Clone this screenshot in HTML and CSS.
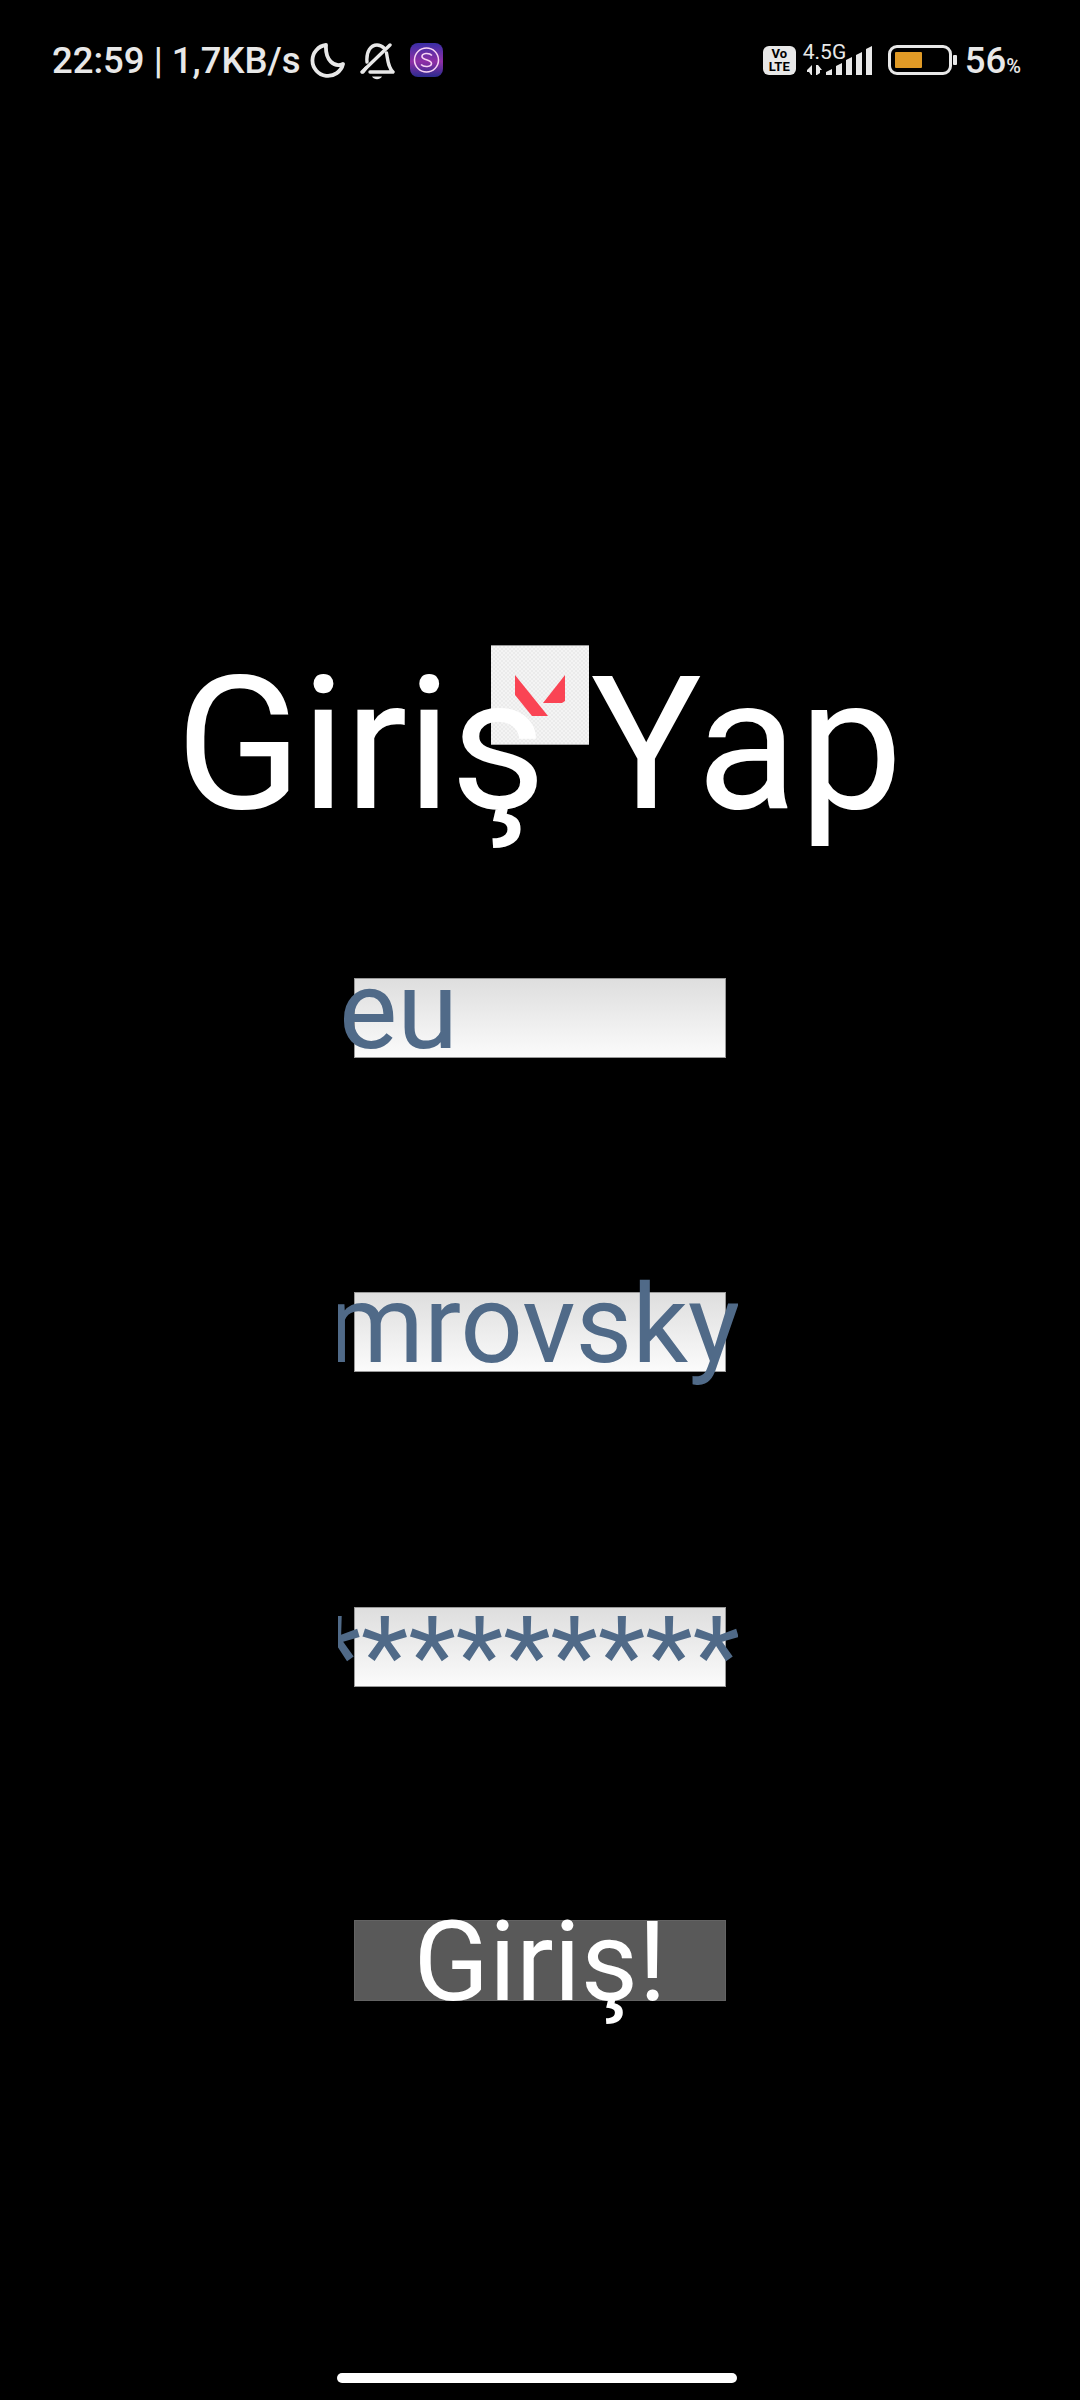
FILE: index.html
```html
<!DOCTYPE html>
<html lang="en">
<head>
    <meta charset="UTF-8">
    <title>Giriş Yap</title>
    <link rel="stylesheet" href="styles.css">
</head>
<body>

    <div class="status-bar">
        <div class="status-left">
            <span class="status-text">22:59 | 1,7KB/s</span>
            <svg class="icon-moon" width="35" height="35" viewBox="0 0 35 35">
                <path d="M16 2A15.5 15.5 0 1 0 33 21C24 25 15 17 16 2Z" fill="none" stroke="#e8e8e8" stroke-width="3.8" stroke-linejoin="round"/>
            </svg>
            <svg class="icon-bell" width="35" height="39" viewBox="0 0 35 39">
                <path d="M30 3L2 30" fill="none" stroke="#e8e8e8" stroke-width="3.4" stroke-linecap="round"/>
                <path d="M7 20C6 9 11 3 17 3C20 3 22 4 24 6M26.500 11C28 19 28 25 33 30H10M6 26L3 30" fill="none" stroke="#e8e8e8" stroke-width="3.4" stroke-linejoin="round" stroke-linecap="round"/>
                <path d="M12 34.500C14 38 20 38 22 34.500Z" fill="#e8e8e8"/>
            </svg>
            <svg class="icon-app" width="33" height="34" viewBox="0 0 33 34">
                <defs>
                    <linearGradient id="appFill" x1="0" y1="0" x2="0" y2="1">
                        <stop offset="0" stop-color="#3a2ea6"/>
                        <stop offset="0.55" stop-color="#8f2fa6"/>
                        <stop offset="1" stop-color="#2a2b8e"/>
                    </linearGradient>
                </defs>
                <rect width="33" height="34" rx="8" fill="url(#appFill)"/>
                <circle cx="16.500" cy="17" r="12" fill="none" stroke="#f8d4f4" stroke-width="1.500"/>
                <path d="M22 12.500C19 9.500 12 10 12 13.500C12 17.500 21.500 16 21.500 20.500C21.500 24 14 24.500 11 21.500" fill="none" stroke="#f8d4f4" stroke-width="1.600"/>
            </svg>
        </div>
        <div class="status-right">
            <div class="volte"><span>Vo</span><span>LTE</span></div>
            <div class="network">
                <span class="network-label">4.5G</span>
                <svg class="icon-signal" width="66" height="30" viewBox="0 0 66 30">
                    <path d="M0 24L5 19V29H4L2 26H0ZM9 19H11L15 24H13V27L10 29H9Z" fill="#e8e8e8"/>
                    <path d="M19 26L25 23V29H19Z" fill="#e8e8e8"/>
                    <path d="M29 20L35 17V29H29Z" fill="#e8e8e8"/>
                    <path d="M39 14L45 11V29H39Z" fill="#e8e8e8"/>
                    <path d="M49 9L55 6V29H49Z" fill="#e8e8e8"/>
                    <path d="M59 3L65 0V29H59Z" fill="#e8e8e8"/>
                </svg>
            </div>
            <div class="battery">
                <div class="battery-body"><div class="battery-fill"></div></div>
                <div class="battery-nub"></div>
            </div>
            <span class="status-text">56<small class="percent">%</small></span>
        </div>
    </div>

    <div class="login">
        <div class="title-wrap">
            <div class="logo">
                <svg width="50" height="42" viewBox="0 0 50 42">
                    <path d="M0 0L33 41H17L0 20Z" fill="#fa4454"/>
                    <path d="M50 0V26L47 28H28Z" fill="#fa4454"/>
                </svg>
            </div>
            <h1 class="title"><span class="title-first">Giriş</span> <span class="title-last">Yap</span></h1>
        </div>

        <div class="field">
            <div class="field-text"><span>eu</span></div>
        </div>
        <div class="field field-user">
            <div class="field-text field-end"><span>mrovsky</span></div>
        </div>
        <div class="field field-pass">
            <div class="field-text field-end field-stars"><span>*********</span></div>
        </div>
        <div class="submit">Giriş!</div>
    </div>

    <div class="home-bar"></div>

</body>
</html>
```

FILE: styles.css
```css
body {
    margin: 0;
    width: 1080px;
    height: 2400px;
    background: #000;
    font-family: Roboto, "Liberation Sans", sans-serif;
    display: flex;
    flex-direction: column;
    overflow: hidden;
}

/* status bar */
.status-bar {
    display: flex;
    justify-content: space-between;
    padding: 41px 59px 0 52px;
    height: 60px;
    color: #e8e8e8;
}
.status-left, .status-right {
    display: flex;
    align-items: flex-start;
}
.status-text {
    font-size: 36.5px;
    font-weight: 500;
    line-height: 40px;
    white-space: nowrap;
}
.percent {
    font-size: 20px;
}
.icon-moon {
    margin: 2px 0 0 9px;
}
.icon-bell {
    margin: 1px 0 0 15px;
}
.icon-app {
    margin: 2px 0 0 15px;
}
.volte {
    width: 33px;
    height: 29px;
    margin-top: 5px;
    background: #e8e8e8;
    border-radius: 6px;
    color: #000;
    font-size: 13px;
    line-height: 12.500px;
    font-weight: 700;
    display: flex;
    flex-direction: column;
    align-items: center;
    justify-content: center;
}
.network {
    width: 71px;
    margin-left: 7px;
    position: relative;
    height: 40px;
}
.network-label {
    position: absolute;
    left: 0;
    top: 0;
    font-size: 21px;
    line-height: 22px;
}
.icon-signal {
    position: absolute;
    left: 4px;
    top: 5px;
}
.battery {
    display: flex;
    align-items: center;
    margin: 4px 8px 0 14px;
}
.battery-body {
    width: 64px;
    height: 30px;
    box-sizing: border-box;
    border: 3px solid #e8e8e8;
    border-radius: 9px;
    padding: 4px;
}
.battery-fill {
    width: 27px;
    height: 16px;
    background: #e09a26;
    border-radius: 1px;
}
.battery-nub {
    width: 4px;
    height: 10px;
    margin-left: 1px;
    background: #e8e8e8;
    border-radius: 1px;
}

/* login form */
.login {
    display: flex;
    flex-direction: column;
    align-items: center;
    margin-top: 544px;
}
.title-wrap {
    position: relative;
    width: 100%;
    margin-bottom: 133px;
}
.logo {
    position: absolute;
    left: 491px;
    top: 0;
    width: 98px;
    height: 100px;
    box-sizing: border-box;
    border-top: 1px solid #999;
    border-bottom: 1px solid #aaa;
    padding: 29px 0 0 24px;
    background: repeating-conic-gradient(#f4f4f4 0 25%, #ebebeb 0 50%) 0 0 / 4px 4px;
}
.logo svg {
    display: block;
}
.title {
    position: relative;
    margin: 0;
    font-size: 185px;
    line-height: 200px;
    font-weight: 400;
    color: #fff;
    text-align: center;
}
.title-first {
    letter-spacing: -1px;
}
.title-last {
    letter-spacing: 1.5px;
}
.field {
    width: 372px;
    height: 80px;
    box-sizing: border-box;
    border: 1px solid #999;
    background: linear-gradient(#dedede, #fbfbfb);
    margin-bottom: 234px;
}
.field-user {
    margin-bottom: 235px;
}
.field-pass {
    margin-bottom: 233px;
}
.field-text {
    margin: 0 -13px 0 -17px;
    padding-left: 1px;
    display: flex;
    overflow-x: clip;
    overflow-y: visible;
    white-space: nowrap;
    font-size: 110px;
    line-height: 64px;
    color: #506a88;
}
.field-end {
    justify-content: flex-end;
}
.field-end span {
    margin-right: -2px;
}
.field-stars {
    padding-top: 17px;
}
.submit {
    width: 372px;
    height: 81px;
    box-sizing: border-box;
    border: 1px solid #636363;
    background: #595959;
    color: #fff;
    font-size: 111px;
    line-height: 83px;
    text-align: center;
}

.home-bar {
    width: 400px;
    height: 10px;
    margin: auto 0 17px 337px;
    background: #fff;
    border-radius: 5px;
}
```
